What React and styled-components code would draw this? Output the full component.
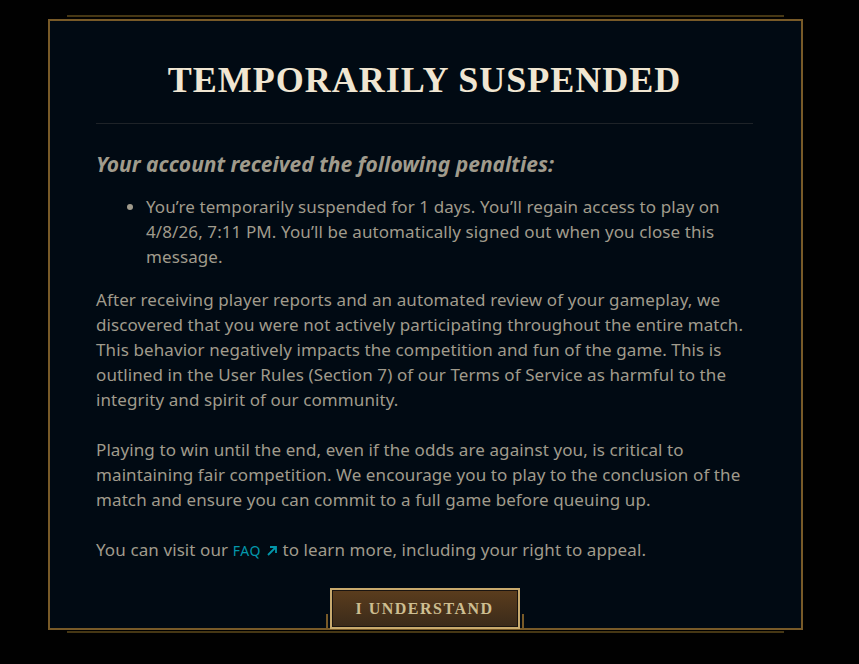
import styled, { createGlobalStyle } from "styled-components";

const GlobalStyle = createGlobalStyle`
  html, body {
    margin: 0;
    padding: 0;
    background: #010101;
  }
  body {
    font-family: "Noto Sans", "Open Sans", sans-serif;
  }
`;

const Page = styled.div`
  width: 859px;
  height: 664px;
  padding: 19px 0 0 48px;
  box-sizing: border-box;
`;

// caixa principal com a moldura dourada
const Modal = styled.div`
  position: relative;
  width: 755px;
  height: 611px;
  box-sizing: border-box;
  background: #010a13;
  border: 2px solid #785a28;
  padding: 38px 48px 0 46px;
  display: flex;
  flex-direction: column;

  // moldura de tras, mais escura
  &::before {
    content: "";
    position: absolute;
    top: -6px;
    bottom: -5px;
    left: 17px;
    right: 17px;
    border-top: 2px solid #463714;
    border-bottom: 2px solid #463714;
    pointer-events: none;
  }
`;

const Titulo = styled.h1`
  margin: 0;
  text-align: center;
  font-family: "Liberation Serif", "DejaVu Serif", serif;
  font-weight: bold;
  font-size: 36px;
  line-height: 42px;
  letter-spacing: 1px;
  color: #f0e6d2;
`;

const Divisor = styled.hr`
  margin: 22px 0 0;
  border: none;
  height: 1px;
  background: #1e2328;
`;

const Subtitulo = styled.h2`
  margin: 27px 0 0;
  font-size: 21px;
  line-height: 26px;
  font-style: italic;
  font-weight: bold;
  color: #a09b8c;
`;

const textoBase = `
  font-size: 17px;
  line-height: 25px;
  letter-spacing: 0.1px;
  color: #a09b8c;
`;

const Lista = styled.ul`
  margin: 17px 0 0;
  padding-left: 50px;
  li {
    ${textoBase}
  }
`;

const Paragrafo = styled.p`
  margin: ${(p) => (p.$gap ? p.$gap : "25px")} 0 0;
  ${textoBase}
`;

const LinkFaq = styled.a`
  color: #0397ab;
  font-size: 14px;
  text-decoration: none;
  letter-spacing: 0.5px;
  svg {
    margin: 0 0 -1px 5px;
  }
`;

const Rodape = styled.div`
  margin-top: auto;
  display: flex;
  justify-content: center;
  margin-bottom: -1px;
`;

// molde do botao com os tracinhos laterais
const BotaoMoldura = styled.div`
  position: relative;
  padding: 0 4px;
  display: flex;

  &::before,
  &::after {
    content: "";
    position: absolute;
    bottom: 0;
    width: 2px;
    height: 15px;
    background: #785a28;
  }
  &::before {
    left: 0;
  }
  &::after {
    right: 0;
  }
`;

const Botao = styled.button`
  width: 190px;
  height: 41px;
  box-sizing: border-box;
  border: 2px solid #c8aa6e;
  box-shadow: inset 0 0 0 1px #1a1410;
  background: linear-gradient(to bottom, #5b3d1d, #3a2a1a);
  color: #cdbe91;
  font-family: "Liberation Serif", "DejaVu Serif", serif;
  font-weight: bold;
  font-size: 16px;
  letter-spacing: 1.5px;
  padding: 0;
  cursor: pointer;
`;

export default function App() {
  return (
    <>
      <GlobalStyle />
      <Page>
        <Modal>
          <Titulo>TEMPORARILY SUSPENDED</Titulo>
          <Divisor />
          <Subtitulo>Your account received the following penalties:</Subtitulo>
          <Lista>
            <li>
              You’re temporarily suspended for 1 days. You’ll regain access to play on
              4/8/26, 7:11 PM. You’ll be automatically signed out when you close this
              message.
            </li>
          </Lista>
          <Paragrafo $gap="18px">
            After receiving player reports and an automated review of your gameplay, we
            discovered that you were not actively participating throughout the entire
            match. This behavior negatively impacts the competition and fun of the game.
            This is outlined in the User Rules (Section 7) of our Terms of Service as
            harmful to the integrity and spirit of our community.
          </Paragrafo>
          <Paragrafo>
            Playing to win until the end, even if the odds are against you, is critical
            to maintaining fair competition. We encourage you to play to the conclusion
            of the match and ensure you can commit to a full game before queuing up.
          </Paragrafo>
          <Paragrafo>
            You can visit our{" "}
            <LinkFaq href="#">
              FAQ
              <svg width="12" height="12" viewBox="0 0 12 12">
                <path
                  d="M2 10 L10 2 M4 2 H10 V8"
                  fill="none"
                  stroke="#0397ab"
                  strokeWidth="1.8"
                />
              </svg>
            </LinkFaq>{" "}
            to learn more, including your right to appeal.
          </Paragrafo>
          <Rodape>
            <BotaoMoldura>
              <Botao>I UNDERSTAND</Botao>
            </BotaoMoldura>
          </Rodape>
        </Modal>
      </Page>
    </>
  );
}
